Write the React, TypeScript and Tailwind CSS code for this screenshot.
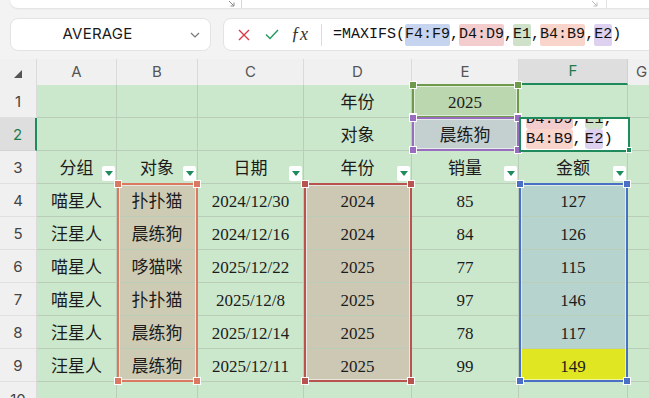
import React from "react";

const LEFT = [0, 37, 117, 198, 304, 412, 519, 628];
const ROW_TOP = (r: number) => 26 + (r - 1) * 33; // relative to grid top

const data: string[][] = [
  ["", "", "", "年份", "2025", ""],
  ["", "", "", "对象", "晨练狗", ""],
  ["分组", "对象", "日期", "年份", "销量", "金额"],
  ["喵星人", "扑扑猫", "2024/12/30", "2024", "85", "127"],
  ["汪星人", "晨练狗", "2024/12/16", "2024", "84", "126"],
  ["喵星人", "哆猫咪", "2025/12/22", "2025", "77", "115"],
  ["喵星人", "扑扑猫", "2025/12/8", "2025", "97", "146"],
  ["汪星人", "晨练狗", "2025/12/14", "2025", "78", "117"],
  ["汪星人", "晨练狗", "2025/12/11", "2025", "99", "149"],
  ["", "", "", "", "", ""],
];

function bgFor(r: number, c: number): string {
  if (r === 1 && c === 4) return "bg-[#bad7b0]";
  if (r === 2 && c === 4) return "bg-[#c4d0d0]";
  if (r >= 4 && r <= 9) {
    if (c === 1) return "bg-[#cecbb4]";
    if (c === 3) return "bg-[#ccc8b4]";
    if (c === 5) return r === 9 ? "bg-[#e0e622]" : "bg-[#b7d3cd]";
  }
  return "bg-[#cbe8cc]";
}

function Range({ x, y, w, h, color }: { x: number; y: number; w: number; h: number; color: string }) {
  const hs = [
    [x - 3, y - 3],
    [x + w - 5, y - 3],
    [x - 3, y + h - 5],
    [x + w - 5, y + h - 5],
  ];
  return (
    <>
      <div
        className="absolute pointer-events-none"
        style={{ left: x, top: y, width: w, height: h, border: `2px solid ${color}`, boxShadow: "inset 0 0 0 1px rgba(255,255,255,0.55)" }}
      />
      {hs.map(([hx, hy], i) => (
        <div
          key={i}
          className="absolute border border-white"
          style={{ left: hx, top: hy, width: 8, height: 8, background: color }}
        />
      ))}
    </>
  );
}

function FilterBtn() {
  return (
    <div className="absolute right-[1px] bottom-[2px] w-[13px] h-[15px] bg-white rounded-[2px] flex items-center justify-center">
      <svg width="8" height="5" viewBox="0 0 8 5">
        <path d="M0 0 L8 0 L4 5 Z" fill="#1f8a5b" />
      </svg>
    </div>
  );
}

function Corner({ color }: { color: string }) {
  return (
    <svg width="7" height="7" viewBox="0 0 7 7">
      <path d="M1 1 L6 6 M6 2.5 L6 6 L2.5 6" stroke={color} strokeWidth="1" fill="none" />
    </svg>
  );
}

export default function App() {
  const mono = { fontFamily: '"Liberation Mono", "Noto Sans CJK SC", monospace' };
  const cellFont = { fontFamily: '"Liberation Serif", "Noto Sans CJK SC", serif' };
  const ui = { fontFamily: 'Inter, "Noto Sans", sans-serif' };

  return (
    <div className="w-[649px] h-[398px] overflow-hidden bg-[#f3f3f4] relative" style={ui}>
      {/* top area */}
      <div className="h-[59px] relative">
        <div className="absolute left-[10px] top-[-10px] w-[700px] h-[18px] bg-white rounded-b-lg shadow-[0_1px_2px_rgba(0,0,0,0.08)] flex">
          <div className="w-[231px] flex items-end justify-end pr-[6px] pb-[1px]">
            <Corner color="#8a8a8a" />
          </div>
          <div className="w-[1px] bg-[#d6d6d6] mt-[10px] h-[8px]" />
          <div className="w-[364px] flex items-end justify-end pr-[8px] pb-[1px]">
            <Corner color="#bbbbbb" />
          </div>
          <div className="w-[1px] bg-[#e2e2e2] mt-[10px] h-[8px]" />
        </div>
        <div className="flex items-start pt-[18px] pl-[10px] gap-[12px]">
          <div className="w-[201px] shrink-0 h-[33px] bg-white rounded-lg border border-[#e3e3e3] flex items-center relative">
            <span className="flex-1 text-center text-[15px] text-[#1a1a1a] pr-[26px] tracking-[0.2px]">AVERAGE</span>
            <svg className="absolute right-[10px] top-[13px]" width="10" height="6" viewBox="0 0 10 6">
              <path d="M1 1 L5 5 L9 1" stroke="#777" strokeWidth="1.2" fill="none" />
            </svg>
          </div>
          <div className="w-[440px] shrink-0 h-[33px] bg-white rounded-l-lg border border-[#e3e3e3] flex items-center">
            <svg className="ml-[14px]" width="12" height="12" viewBox="0 0 12 12">
              <path d="M1 1 L11 11 M11 1 L1 11" stroke="#d9384a" strokeWidth="1.4" />
            </svg>
            <svg className="ml-[15px]" width="14" height="11" viewBox="0 0 14 11">
              <path d="M1 5.5 L5 9.5 L13 1" stroke="#1f9a5e" strokeWidth="1.4" fill="none" />
            </svg>
            <span className="ml-[12px] text-[18px] italic text-[#333]" style={{ fontFamily: '"Liberation Serif", serif' }}>
              ƒx
            </span>
            <div className="ml-[13px] w-[1px] h-[22px] bg-[#dcdcdc]" />
            <div className="ml-[11px] text-[15px] text-[#111] flex items-center leading-[22px]" style={mono}>
              <span>=MAXIFS(</span>
              <span className="bg-[#c6d4ef] rounded-[2px]">F4:F9</span>
              <span>,</span>
              <span className="bg-[#f3cdcd] rounded-[2px]">D4:D9</span>
              <span>,</span>
              <span className="bg-[#cfe1c9] rounded-[2px]">E1</span>
              <span>,</span>
              <span className="bg-[#f8d4ca] rounded-[2px]">B4:B9</span>
              <span>,</span>
              <span className="bg-[#ded1ef] rounded-[2px]">E2</span>
              <span>)</span>
            </div>
          </div>
        </div>
      </div>

      {/* grid */}
      <div className="relative">
        <div className="grid grid-cols-[37px_80px_81px_106px_108px_107px_109px_21px] grid-rows-[26px_repeat(10,33px)]">
          {/* header row */}
          <div className="bg-[#f0f0f0] border-r border-[#dadada] relative">
            <svg className="absolute left-[14px] top-[11px]" width="8" height="8" viewBox="0 0 8 8">
              <path d="M8 0 L8 8 L0 8 Z" fill="#555" />
            </svg>
          </div>
          {["A", "B", "C", "D", "E", "F", "G"].map((l) => (
            <div
              key={l}
              className={
                l === "F"
                  ? "bg-[#dedede] border-r border-[#d0d0d0] border-b-2 border-b-[#1f8a5b] flex items-center justify-center text-[15px] text-[#1f7a4d]"
                  : l === "G"
                  ? "bg-[#f0f0f0] flex items-center justify-start pl-[8px] text-[15px] text-[#555]"
                  : "bg-[#f0f0f0] border-r border-[#dadada] flex items-center justify-center text-[15px] text-[#555]"
              }
            >
              {l}
            </div>
          ))}
          {data.map((row, ri) => {
            const r = ri + 1;
            return (
              <React.Fragment key={r}>
                <div
                  className={
                    r === 2
                      ? "bg-[#dedede] border-r-2 border-r-[#1f8a5b] border-b border-b-[#d4d4d4] flex items-center justify-center text-[15px] text-[#1f7a4d] pt-[2px]"
                      : r === 10
                      ? "bg-[#f0f0f0] border-r border-[#dadada] flex items-start justify-center text-[15px] text-[#444] pt-[7px]"
                      : "bg-[#f0f0f0] border-r border-[#dadada] border-b border-b-[#e0e0e0] flex items-center justify-center text-[15px] text-[#444] pt-[2px]"
                  }
                >
                  {r}
                </div>
                {row.map((t, c) => (
                  <div
                    key={c}
                    className={`${bgFor(r, c)} border-r border-b border-[#b9cdb9] relative flex items-center justify-center pt-[3px] text-[17px] text-[#1c1c1c]`}
                    style={cellFont}
                  >
                    {t}
                    {r === 3 && <FilterBtn />}
                  </div>
                ))}
                <div className="bg-[#cbe8cc] border-b border-[#b9cdb9]" />
              </React.Fragment>
            );
          })}
        </div>

        {/* range overlays */}
        <Range x={LEFT[2]} y={ROW_TOP(4) - 1} w={81} h={199} color="#db7862" />
        <Range x={LEFT[4]} y={ROW_TOP(4) - 1} w={108} h={199} color="#b8534f" />
        <Range x={LEFT[6]} y={ROW_TOP(4) - 1} w={109} h={199} color="#4a70c6" />
        <Range x={LEFT[5]} y={ROW_TOP(1) - 1} w={107} h={34} color="#6f9a4c" />
        <Range x={LEFT[5]} y={ROW_TOP(2) - 1} w={107} h={34} color="#9a6cc0" />

        {/* in-cell editor F2 */}
        <div
          className="absolute bg-white border-2 border-[#1f8a5b] overflow-hidden"
          style={{ left: LEFT[6], top: ROW_TOP(2) - 1, width: 111, height: 35 }}
        >
          <div className="mt-[-10px] pl-[5px] text-[15.5px] leading-[20px] text-[#111]" style={mono}>
            <div className="flex">
              <span className="bg-[#f3cdcd] rounded-[3px]">D4:D9</span>
              <span className="mr-[3px]">,</span>
              <span className="bg-[#cfe1c9] rounded-[3px]">E1</span>
              <span>,</span>
            </div>
            <div className="flex">
              <span className="bg-[#f8d4ca] rounded-[3px]">B4:B9</span>
              <span className="mr-[3px]">,</span>
              <span className="bg-[#ded1ef] rounded-[3px]">E2</span>
              <span>)</span>
            </div>
          </div>
        </div>
        <div
          className="absolute bg-[#1f8a5b] border border-white"
          style={{ left: LEFT[6] + 107, top: ROW_TOP(3) - 4, width: 6, height: 6 }}
        />
      </div>
    </div>
  );
}
